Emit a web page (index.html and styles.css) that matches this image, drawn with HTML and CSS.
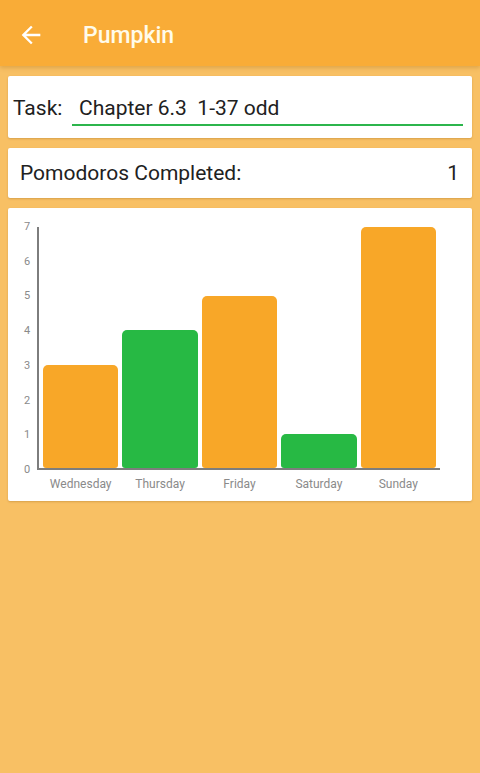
FILE: index.html
```html
<!DOCTYPE html>
<html lang="en">
<head>
  <meta charset="UTF-8">
  <meta name="viewport" content="width=device-width, initial-scale=1.0">
  <title>Pumpkin</title>
  <link rel="stylesheet" href="styles.css">
</head>
<body>

  <header class="app-bar">
    <svg class="back-icon" viewBox="0 0 24 24" width="28" height="28">
      <path d="M20 11H7.83l5.59-5.59L12 4l-8 8 8 8 1.41-1.41L7.83 13H20v-2z" fill="#fff"/>
    </svg>
    <h1 class="title">Pumpkin</h1>
  </header>

  <main class="content">
    <!-- Task -->
    <section class="card task-card">
      <span class="task-label">Task:</span>
      <div class="task-input">Chapter 6.3&nbsp; 1-37 odd</div>
    </section>

    <!-- Pomodoros -->
    <section class="card count-card">
      <span>Pomodoros Completed:</span>
      <span>1</span>
    </section>

    <!-- Weekly chart -->
    <section class="card chart-card">
      <div class="chart">
        <div class="y-labels">
          <span>7</span><span>6</span><span>5</span><span>4</span>
          <span>3</span><span>2</span><span>1</span><span>0</span>
        </div>
        <div class="plot-wrap">
          <div class="plot">
            <div class="bar orange" style="height: 42.86%"></div>
            <div class="bar green" style="height: 57.14%"></div>
            <div class="bar orange" style="height: 71.43%"></div>
            <div class="bar green" style="height: 14.29%"></div>
            <div class="bar orange" style="height: 100%"></div>
          </div>
          <div class="x-labels">
            <span>Wednesday</span>
            <span>Thursday</span>
            <span>Friday</span>
            <span>Saturday</span>
            <span>Sunday</span>
          </div>
        </div>
      </div>
    </section>
  </main>

</body>
</html>
```

FILE: styles.css
```css
/* General */
body {
  margin: 0;
  font-family: Roboto, "Liberation Sans", sans-serif;
  background: #f8c064;
  color: #212121;
  min-height: 773px;
}

/* App bar */
.app-bar {
  display: flex;
  align-items: center;
  height: 62px;
  padding-top: 4px;
  background: #f9ac37;
  box-shadow: 0 2px 4px rgba(150, 90, 0, 0.25);
}

.back-icon {
  margin-left: 17px;
}

.title {
  margin: 0 0 0 38px;
  font-size: 23px;
  font-weight: 500;
  color: #fffbea;
}

/* Cards */
.content {
  display: flex;
  flex-direction: column;
  gap: 10px;
  padding: 10px 8px;
}

.card {
  background: #fff;
  border-radius: 2px;
  box-shadow: 0 1px 2px rgba(120, 70, 0, 0.25);
}

.task-card {
  display: flex;
  align-items: flex-end;
  height: 62px;
  padding: 0 9px 12px 5px;
  box-sizing: border-box;
  font-size: 21px;
  line-height: 24px;
}

.task-label {
  width: 59px;
  margin-bottom: 6px;
}

.task-input {
  flex: 1;
  padding: 0 7px 4px;
  border-bottom: 2px solid #2cb54c;
}

.count-card {
  display: flex;
  justify-content: space-between;
  align-items: center;
  height: 50px;
  padding: 0 13px 0 12px;
  font-size: 21px;
}

/* Chart */
.chart-card {
  height: 293px;
  box-sizing: border-box;
  padding: 19px 0 0 14px;
}

.chart {
  display: flex;
  align-items: flex-start;
}

.y-labels {
  display: flex;
  flex-direction: column;
  justify-content: space-between;
  width: 10px;
  height: 257px;
  margin-top: -7px;
  margin-right: 5px;
  font-size: 11px;
  line-height: 14px;
  color: #8a8a8a;
  text-align: center;
}

.plot-wrap {
  width: 403px;
}

.plot {
  display: flex;
  align-items: flex-end;
  gap: 4px;
  height: 241px;
  padding: 0 4px;
  border-left: 2px solid #7d7d7d;
  border-bottom: 2px solid #7d7d7d;
}

.bar {
  flex: 1;
  border-radius: 5px 5px 3px 3px;
}

.bar.orange {
  background: #f8a728;
}

.bar.green {
  background: #27b944;
}

.x-labels {
  display: flex;
  gap: 4px;
  padding: 7px 4px 0 6px;
  font-size: 12px;
  color: #8a8a8a;
}

.x-labels span {
  flex: 1;
  text-align: center;
}
```
